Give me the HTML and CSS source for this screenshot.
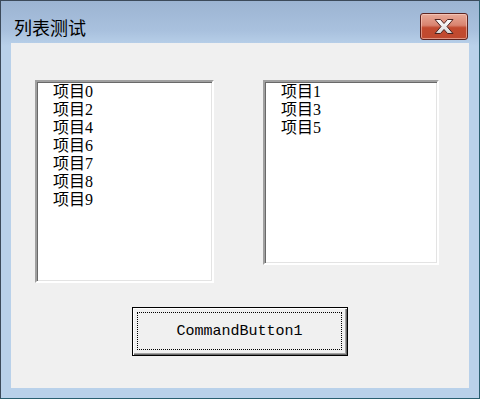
FILE: index.html
```html
<!DOCTYPE html>
<html>
<head>
    <title>列表测试</title>
    <link rel="stylesheet" href="styles.css">
</head>
<body>
    <div class="window">
        <div class="titlebar">
            <span class="title">列表测试</span>
            <div class="close-btn">
                <svg width="22" height="17" viewBox="0 0 22 17">
                    <defs>
                        <linearGradient id="xfill" x1="0" y1="0" x2="0" y2="1">
                            <stop offset="0" stop-color="#ffffff"/>
                            <stop offset="1" stop-color="#d8d8d8"/>
                        </linearGradient>
                    </defs>
                    <path d="M2 1.5 L7.5 1.5 L11 5.5 L14.5 1.5 L20 1.5 L14 8.5 L20 15.5 L14.5 15.5 L11 11.5 L7.5 15.5 L2 15.5 L8 8.5 Z" fill="url(#xfill)" stroke="#4a2320" stroke-width="1" stroke-linejoin="round"/>
                </svg>
            </div>
        </div>
        <div class="client">
            <div class="lists">
                <div class="listbox left-list">
                    <div class="item">项目0</div>
                    <div class="item">项目2</div>
                    <div class="item">项目4</div>
                    <div class="item">项目6</div>
                    <div class="item">项目7</div>
                    <div class="item">项目8</div>
                    <div class="item">项目9</div>
                </div>
                <div class="listbox right-list">
                    <div class="item">项目1</div>
                    <div class="item">项目3</div>
                    <div class="item">项目5</div>
                </div>
            </div>
            <div class="button-row">
                <div class="cmd-button">
                    <div class="focus-rect">CommandButton1</div>
                </div>
            </div>
        </div>
    </div>
</body>
</html>
```

FILE: styles.css
```css
body {
    margin: 0;
    padding: 0;
    background-color: #ffffff;
}

.window {
    width: 480px;
    height: 399px;
    box-sizing: border-box;
    border: 1px solid #3c4a5a;
    border-right-color: #2a5f70;
    border-bottom-color: #2a5f70;
    background: linear-gradient(to bottom, #9cb4d2 0px, #a9c1de 30px, #b9d1ea 45px, #b9d1ea 100%);
    padding: 0 10px 10px 10px;
    display: flex;
    flex-direction: column;
}

.titlebar {
    height: 42px;
    display: flex;
    align-items: flex-start;
    justify-content: space-between;
}

.title {
    font-family: "Noto Sans CJK SC", sans-serif;
    font-size: 18px;
    line-height: 20px;
    margin-top: 16px;
    margin-left: 3px;
    color: #000000;
}

.close-btn {
    width: 48px;
    height: 27px;
    margin-top: 12px;
    margin-right: 1px;
    box-sizing: border-box;
    border: 1px solid #5e2420;
    border-radius: 3px;
    background: linear-gradient(to bottom, #e8aa98 0%, #d98470 45%, #c24a2f 55%, #bf4a30 100%);
    box-shadow: inset 0 0 0 1px rgba(255, 220, 210, 0.5);
    display: flex;
    align-items: center;
    justify-content: center;
}

.client {
    flex: 1;
    background-color: #f0f0f0;
    display: flex;
    flex-direction: column;
    padding-top: 37px;
}

.lists {
    display: flex;
    align-items: flex-start;
    padding-left: 24px;
    gap: 49px;
}

.listbox {
    box-sizing: border-box;
    background-color: #ffffff;
    border-style: solid;
    border-width: 2px;
    border-color: #a0a0a0 #ffffff #ffffff #a0a0a0;
    box-shadow: inset 1px 1px 0 #696969, inset -1px -1px 0 #e3e3e3;
    padding: 1px 0 0 16px;
    font-family: "Liberation Serif", "Noto Sans CJK SC", serif;
    font-size: 16px;
    line-height: 18px;
    color: #000000;
}

.left-list {
    width: 179px;
    height: 203px;
}

.right-list {
    width: 176px;
    height: 185px;
}

.item {
    height: 18px;
}

.button-row {
    display: flex;
    justify-content: center;
    margin-top: 24px;
}

.cmd-button {
    width: 216px;
    height: 49px;
    box-sizing: border-box;
    border: 1px solid #000000;
    background-color: #f0f0f0;
    box-shadow: inset 1px 1px 0 #ffffff, inset -1px -1px 0 #696969, inset -2px -2px 0 #a0a0a0;
    padding: 4px 5px 5px 4px;
    display: flex;
}

.focus-rect {
    flex: 1;
    border: 1px dotted #000000;
    display: flex;
    align-items: center;
    justify-content: center;
    font-family: "Liberation Mono", monospace;
    font-size: 15px;
    color: #000000;
}
```
